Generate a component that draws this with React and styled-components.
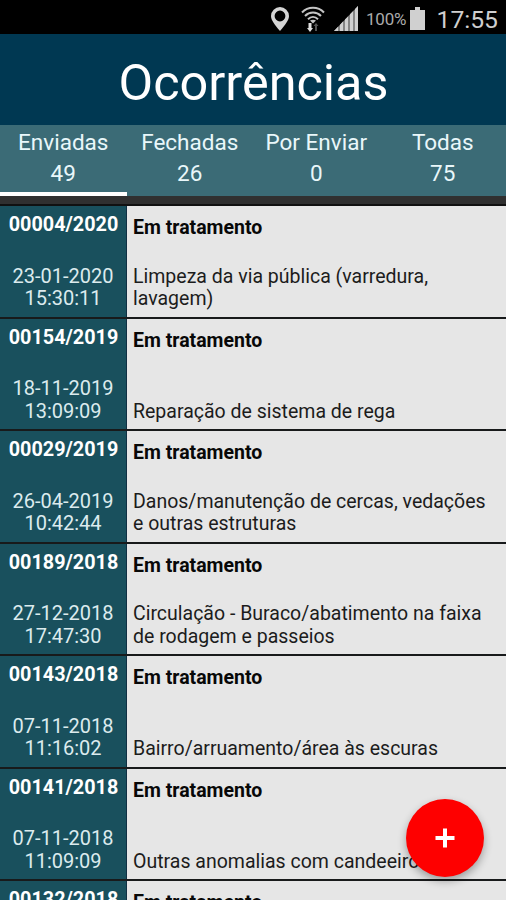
import { useState } from 'react';
import styled, { createGlobalStyle } from 'styled-components';

const GlobalStyle = createGlobalStyle`
	* {
		box-sizing: border-box;
	}

	body {
		margin: 0;
		font-family: Roboto, 'Liberation Sans', sans-serif;
	}
`;

const TABS = [
	{ id: 'sent', label: 'Enviadas', count: 49 },
	{ id: 'closed', label: 'Fechadas', count: 26 },
	{ id: 'pending', label: 'Por Enviar', count: 0 },
	{ id: 'all', label: 'Todas', count: 75 },
];

const OCCURRENCES = [
	{
		number: '00004/2020',
		date: '23-01-2020',
		time: '15:30:11',
		description: 'Limpeza da via pública (varredura, lavagem)',
	},
	{
		number: '00154/2019',
		date: '18-11-2019',
		time: '13:09:09',
		description: 'Reparação de sistema de rega',
	},
	{
		number: '00029/2019',
		date: '26-04-2019',
		time: '10:42:44',
		description: 'Danos/manutenção de cercas, vedações e outras estruturas',
	},
	{
		number: '00189/2018',
		date: '27-12-2018',
		time: '17:47:30',
		description: 'Circulação - Buraco/abatimento na faixa de rodagem e passeios',
	},
	{
		number: '00143/2018',
		date: '07-11-2018',
		time: '11:16:02',
		description: 'Bairro/arruamento/área às escuras',
	},
	{
		number: '00141/2018',
		date: '07-11-2018',
		time: '11:09:09',
		description: 'Outras anomalias com candeeiros',
	},
	{ number: '00132/2018', date: '', time: '', description: '' },
];

const Screen = styled.div`
	position: relative;
	display: flex;
	flex-direction: column;
	width: 506px;
	height: 900px;
	overflow: hidden;
	background: #303030;
`;

const StatusBarContainer = styled.div`
	display: flex;
	flex: none;
	align-items: center;
	height: 34px;
	padding: 3px 8px 0 271px;
	background: #000;
	color: #cfcfcf;

	& svg {
		display: block;
		flex: none;
	}
`;

const WifiIcon = styled.svg`
	margin-left: 12px;
`;

const SignalIcon = styled.svg`
	margin-left: 9px;
`;

const BatteryLevel = styled.span`
	width: 41px;
	margin: 1px 3px 0 8px;
	font-size: 17px;
	letter-spacing: -0.2px;
	color: #aaa;
`;

const Clock = styled.span`
	margin: 3px 0 0 auto;
	font-size: 24.7px;
	line-height: 30px;
`;

const Header = styled.header`
	display: flex;
	flex: none;
	align-items: center;
	justify-content: center;
	height: 91px;
	padding: 6px 0 0 1px;
	background: #003852;
`;

const Title = styled.h1`
	margin: 0;
	font-size: 50.4px;
	font-weight: 400;
	line-height: 60px;
	color: #fff;
`;

const TabBar = styled.nav`
	display: grid;
	flex: none;
	grid-template-columns: repeat(4, 1fr);
	height: 71px;
	background: #3b6b76;
`;

const Tab = styled.button`
	display: flex;
	flex-direction: column;
	align-items: center;
	padding: 2px 0 0;
	border: 0;
	border-bottom: 4px solid ${({ $active }) => ($active ? '#fff' : 'transparent')};
	background: none;
	font: inherit;
	font-size: 22.5px;
	line-height: 31px;
	white-space: nowrap;
	color: #e9f7fa;
`;

const List = styled.div`
	flex: none;
	margin-top: 8px;
	border-top: 2px solid #111;
`;

const Row = styled.div`
	display: grid;
	grid-template-columns: 127px 1fr;
	height: 112.5px;
	border-bottom: 2px solid #181a1b;
`;

const Identity = styled.div`
	display: flex;
	flex-direction: column;
	justify-content: space-between;
	padding: 8px 0 7px;
	border-right: 1px solid #102f43;
	background: #19505d;
	font-size: 20px;
	line-height: 22.5px;
	text-align: center;
	color: #dcebee;
`;

const Number = styled.div`
	padding-left: 1px;
	font-size: 19.8px;
	font-weight: 700;
	color: #fff;
`;

const Details = styled.div`
	display: flex;
	flex-direction: column;
	justify-content: space-between;
	padding: 11px 12px 6px 6px;
	background: #e6e6e6;
	font-size: 19.5px;
	line-height: 22.5px;
	color: #1c1c1c;
`;

const Status = styled.div`
	font-weight: 700;
	color: #080808;
`;

const AddButton = styled.button`
	position: absolute;
	top: 799px;
	left: 406px;
	display: flex;
	align-items: center;
	justify-content: center;
	width: 78px;
	height: 78px;
	padding: 0;
	border: 0;
	border-radius: 50%;
	background: #fe0000;
	box-shadow: 0 4px 9px rgba(0, 0, 0, 0.32);
`;

const StatusBar = () => (
	<StatusBarContainer>
		<svg width="18" height="24" viewBox="0 0 18 24">
			<path
				fill="#d4d4d4"
				fillRule="evenodd"
				d="M9 0a9 9 0 0 0-9 9c0 4 3.5 8.600 9 15 5.500-6.400 9-11 9-15a9 9 0 0 0-9-9Zm0 3.600a5.400 5.400 0 1 1 0 10.800 5.400 5.400 0 0 1 0-10.800Z"
			/>
		</svg>
		<WifiIcon width="24" height="26" viewBox="0 0 24 26">
			<g fill="none" stroke="#c4c4c4" strokeWidth="2">
				<path d="M1 6.500C7 .2 17 .2 23 6.500" />
				<path d="M4 10c4.500-4.600 11.500-4.600 16 0" />
				<path d="M7 13.300c3-3 7-3 10 0" />
			</g>
			<path fill="#c4c4c4" d="M9 14.500q3-1.500 6 0l-3 3Z" />
			<path fill="#e0e0e0" d="M7.500 17h3v5H12l-3 4-3-4h1.500Z" />
			<path fill="#555" d="M14 25v-5h-1.500l2.500-3 2.500 3H16v5Z" />
		</WifiIcon>
		<SignalIcon width="24" height="25" viewBox="0 0 24 25">
			<path fill="#858585" d="M0 25 24 0v25Z" />
			<path
				fill="#d0d0d0"
				d="M0 25l4-4.200V25ZM6 18.700l3-3.100V25H6ZM11 13.500l3-3.100V25h-3ZM16 8.300l3-3.100V25h-3ZM21 3.100 24 0v25h-3Z"
			/>
		</SignalIcon>
		<BatteryLevel>100%</BatteryLevel>
		<svg width="15" height="23" viewBox="0 0 15 23">
			<path fill="#d0d0d0" d="M5 0h5v3h5v20H0V3h5Z" />
		</svg>
		<Clock>17:55</Clock>
	</StatusBarContainer>
);

const Occurrence = ({ number, date, time, description }) => (
	<Row>
		<Identity>
			<Number>{number}</Number>
			<div>
				{date}
				<br />
				{time}
			</div>
		</Identity>
		<Details>
			<Status>Em tratamento</Status>
			<div>{description}</div>
		</Details>
	</Row>
);

const App = () => {
	const [activeTab, setActiveTab] = useState('sent');

	return (
		<>
			<GlobalStyle />
			<Screen>
				<StatusBar />
				<Header>
					<Title>Ocorrências</Title>
				</Header>
				<TabBar>
					{TABS.map(({ id, label, count }) => (
						<Tab key={id} $active={id === activeTab} onClick={() => setActiveTab(id)}>
							<span>{label}</span>
							<span>{count}</span>
						</Tab>
					))}
				</TabBar>
				<List>
					{OCCURRENCES.map((occurrence) => (
						<Occurrence key={occurrence.number} {...occurrence} />
					))}
				</List>
				<AddButton aria-label="Adicionar">
					<svg width="20" height="20" viewBox="0 0 20 20">
						<path d="M10 .5v19M.5 10h19" stroke="#fff" strokeWidth="4" />
					</svg>
				</AddButton>
			</Screen>
		</>
	);
};

export default App;
